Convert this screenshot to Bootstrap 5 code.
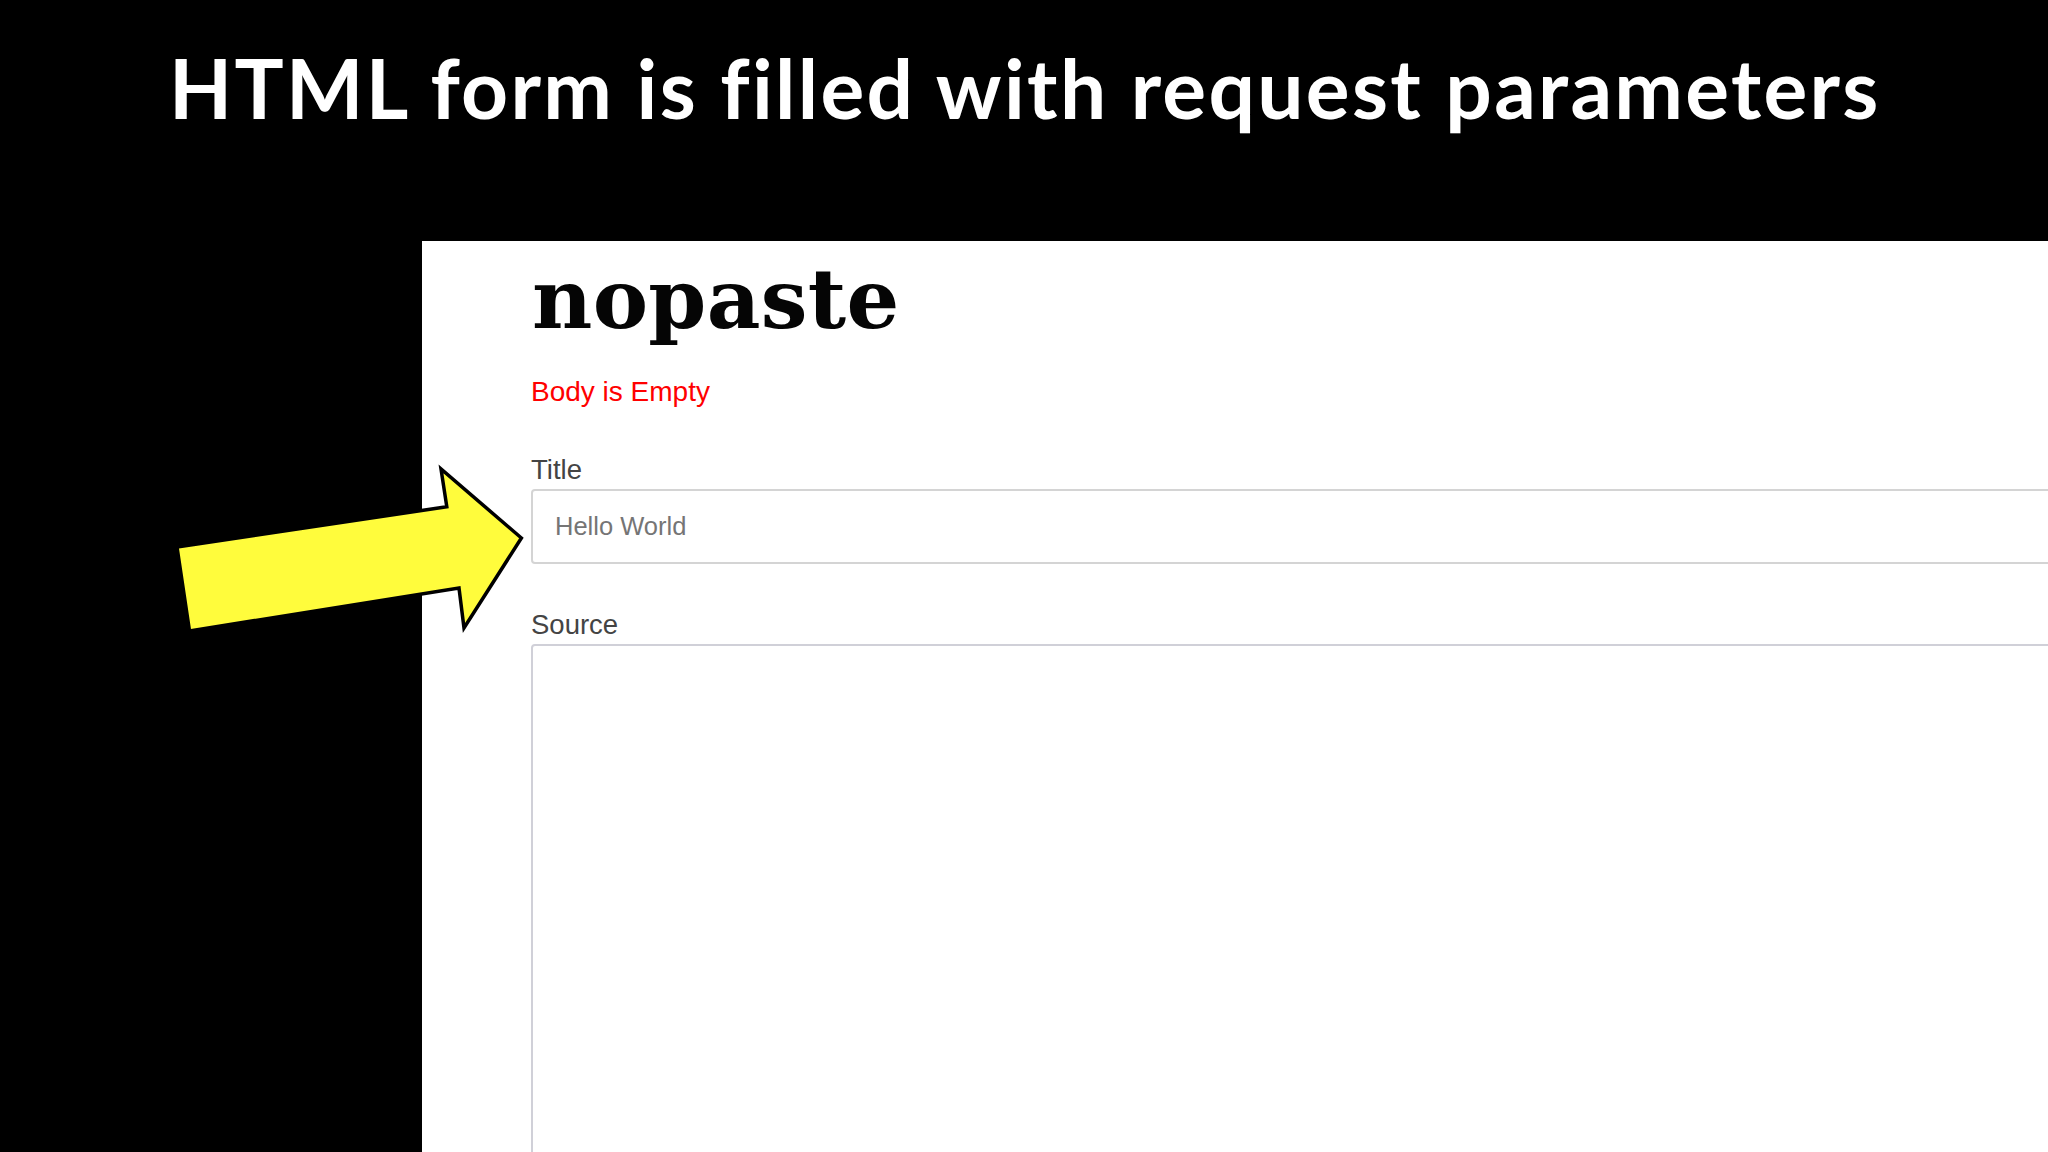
<!DOCTYPE html>
<html lang="en">
<head>
<meta charset="utf-8">
<title>HTML form is filled with request parameters</title>
<link href="https://cdn.jsdelivr.net/npm/bootstrap@5.3.0/dist/css/bootstrap.min.css" rel="stylesheet">
<style>
body { background:#000; height:1152px; overflow:hidden; }
.slide-head { height:241px; padding:38px 0 0 169px; margin:0; color:#fff; font:700 82px/1.2 Lato,sans-serif; letter-spacing:2.3px; white-space:nowrap; }
.shot { height:911px; margin-left:422px; background:#fff; padding-left:109px; overflow:hidden; }
.brand-word { margin:0; height:113px; padding:3px 0 0 1px; font:700 83px/110px "DejaVu Serif",serif; letter-spacing:.3px; color:#050505; }
.err-line { margin:0; padding-top:18px; height:100px; font:28px/40px "Liberation Sans",sans-serif; color:#f00; }
.fld-label { display:block; margin:0 0 3px; font:27.5px/32px "Liberation Sans",sans-serif; color:#444; }
.fld-box { width:1700px; border:2px solid #d4d4d4; border-radius:4px; font:25.5px/30px "Liberation Sans",sans-serif; color:#757575; padding:0 22px; }
.fld-input { height:75px; margin-bottom:45px; }
.fld-area { height:600px; border-color:#d0d0d8; }
.point-arrow { position:absolute; left:0; top:0; }
</style>
</head>
<body>
<h1 class="slide-head">HTML form is filled with request parameters</h1>
<main class="shot">
  <h2 class="brand-word">nopaste</h2>
  <p class="err-line">Body is Empty</p>
  <form>
    <label class="fld-label" for="t">Title</label>
    <input id="t" class="form-control fld-box fld-input" value="Hello World">
    <label class="fld-label" for="s">Source</label>
    <textarea id="s" class="form-control fld-box fld-area"></textarea>
  </form>
</main>
<svg class="point-arrow" width="600" height="700" viewBox="0 0 600 700" aria-hidden="true">
  <polygon points="177,547 446.8,506.7 441,469 521.4,538 464,628 459,588 189.5,631" fill="#fffc3c" stroke="#000" stroke-width="3.5" stroke-linejoin="miter"/>
</svg>
</body>
</html>
